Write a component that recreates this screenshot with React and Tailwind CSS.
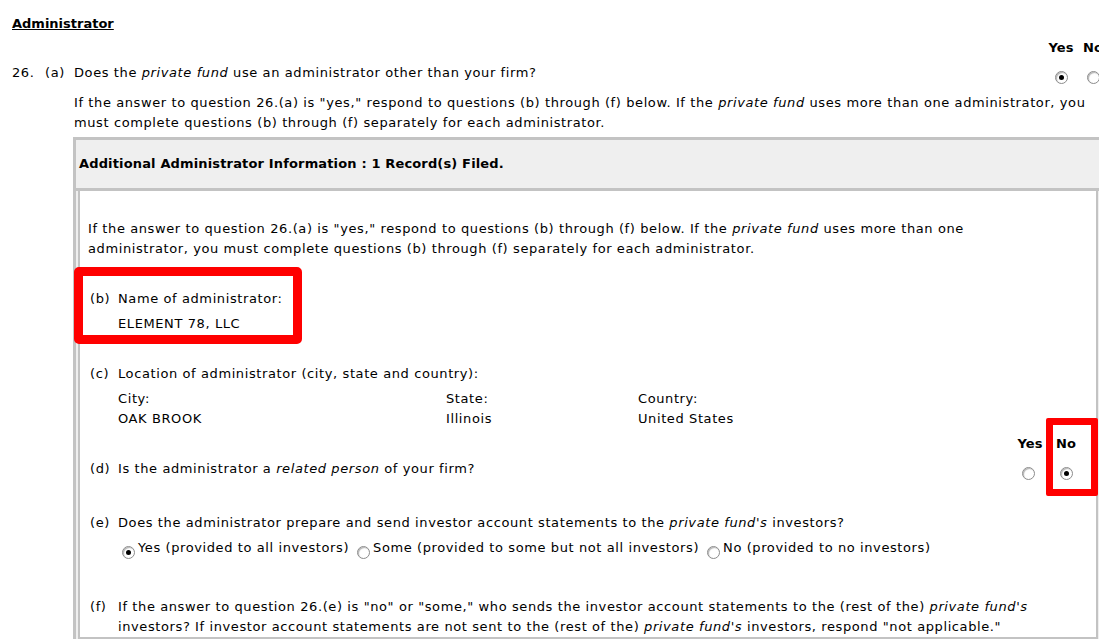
const FONT = { fontFamily: "Verdana, 'DejaVu Sans', sans-serif" };

function Radio({ checked }) {
  return (
    <span className="flex w-[13px] h-[13px] shrink-0 rounded-full border border-[#8c8c8c] bg-white items-center justify-center shadow-[inset_1px_1px_1px_rgba(0,0,0,0.3)]">
      {checked ? <span className="w-[5px] h-[5px] rounded-full bg-black" /> : null}
    </span>
  );
}

function Item({ label, children, className = '' }) {
  return (
    <div className={`flex pl-[10px] ${className}`}>
      <span className="w-[28px] shrink-0">{label}</span>
      <div className="flex-1">{children}</div>
    </div>
  );
}

export default function App() {
  return (
    <div className="relative w-[1099px] h-[641px] overflow-hidden bg-white text-black text-[13px] leading-5 tracking-[0.6px]" style={FONT}>
      <div className="w-[1112px] pl-3 pt-[14px]">
        <div className="font-bold underline tracking-normal">Administrator</div>

        {/* Yes / No header for 26(a) */}
        <div className="flex justify-end pr-[3px] mt-1 font-bold tracking-normal">
          <span className="w-8 text-center">Yes</span>
          <span className="w-8 text-center">No</span>
        </div>

        <div className="flex items-start mt-[5px] pr-[3px]">
          <span className="w-[33px] shrink-0">26.</span>
          <span className="w-[29px] shrink-0">(a)</span>
          <span className="flex-1 whitespace-nowrap">
            Does the <i>private fund</i> use an administrator other than your firm?
          </span>
          <span className="w-8 flex justify-center pt-2"><Radio checked /></span>
          <span className="w-8 flex justify-center pt-2"><Radio /></span>
        </div>

        <p className="ml-[62px] mt-[9px] whitespace-nowrap">
          If the answer to question 26.(a) is "yes," respond to questions (b) through (f) below. If the <i>private fund</i> uses more than one administrator, you
          <br />
          must complete questions (b) through (f) separately for each administrator.
        </p>

        {/* Record box */}
        <div className="ml-[61px] mt-1 w-[1030px] border-[3px] border-b-0 border-[#c3c3c3] bg-[#efefef] px-[2px]">
          <div className="py-[14px] pl-[1px] font-bold tracking-[0.15px]">Additional Administrator Information : 1 Record(s) Filed.</div>
          <div className="-mx-[2px] border-t-[3px] border-[#c3c3c3]" />
          <div className="bg-white border-2 border-t-0 border-[#c3c3c3] pt-[28px]">
            <p className="pl-2 whitespace-nowrap">
              If the answer to question 26.(a) is "yes," respond to questions (b) through (f) below. If the <i>private fund</i> uses more than one
              <br />
              administrator, you must complete questions (b) through (f) separately for each administrator.
            </p>

            <Item label="(b)" className="mt-[30px]">
              Name of administrator:
              <div className="mt-[5px]">ELEMENT 78, LLC</div>
            </Item>

            <Item label="(c)" className="mt-[30px]">
              Location of administrator (city, state and country):
              <div className="grid grid-cols-[328px_192px_1fr] mt-[5px]">
                <span>City:</span>
                <span>State:</span>
                <span>Country:</span>
                <span>OAK BROOK</span>
                <span>Illinois</span>
                <span>United States</span>
              </div>
            </Item>

            <div className="flex justify-end pr-3 mt-[5px] font-bold tracking-normal">
              <span className="w-9 text-center">Yes</span>
              <span className="w-9 text-center">No</span>
            </div>
            <div className="flex items-start mt-[5px] pr-3">
              <Item label="(d)" className="flex-1">
                Is the administrator a <i>related person</i> of your firm?
              </Item>
              <span className="w-9 flex justify-center pt-2 pr-1"><Radio /></span>
              <span className="w-9 flex justify-center pt-2"><Radio checked /></span>
            </div>

            <Item label="(e)" className="mt-[33px]">
              Does the administrator prepare and send investor account statements to the <i>private fund's</i> investors?
              <div className="flex items-start mt-[5px] whitespace-nowrap">
                <span className="flex ml-[4px] mt-2"><Radio checked /></span>
                <span className="ml-[3px]">Yes (provided to all investors)</span>
                <span className="flex ml-[8px] mt-2"><Radio /></span>
                <span className="ml-[3px]">Some (provided to some but not all investors)</span>
                <span className="flex ml-[8px] mt-2"><Radio /></span>
                <span className="ml-[3px]">No (provided to no investors)</span>
              </div>
            </Item>

            <Item label="(f)" className="mt-[38px] whitespace-nowrap">
              If the answer to question 26.(e) is "no" or "some," who sends the investor account statements to the (rest of the) <i>private fund's</i>
              <br />
              investors? If investor account statements are not sent to the (rest of the) <i>private fund's</i> investors, respond "not applicable."
            </Item>
          </div>
        </div>
      </div>

      {/* red annotation boxes */}
      <div className="absolute left-[74px] top-[267px] w-[228px] h-[77px] border-[9px] border-[#ff0000] rounded-[5px]" />
      <div className="absolute left-[1046px] top-[418px] w-[52px] h-[78px] border-[7px] border-[#ff0000] rounded-[2px]" />
    </div>
  );
}
